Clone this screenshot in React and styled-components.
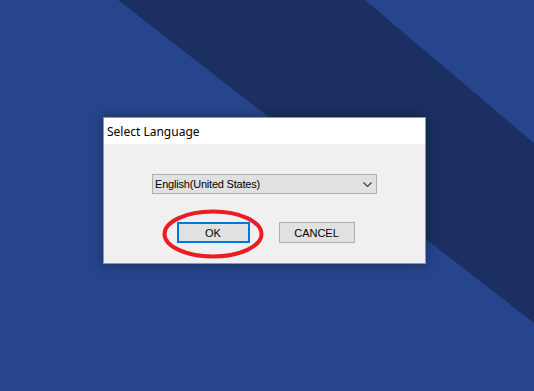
import React from "react";
import styled, { createGlobalStyle } from "styled-components";

const GlobalStyle = createGlobalStyle`
  html, body {
    margin: 0;
    padding: 0;
    background: #26458c;
  }
`;

const Desktop = styled.div`
  position: relative;
  width: 534px;
  height: 391px;
  overflow: hidden;
  background: #26458c;
  box-sizing: border-box;
  padding: 117px 0 0 103px;

  &::before {
    content: "";
    position: absolute;
    inset: 0;
    background: #1c2f62;
    clip-path: polygon(118px 0, 365px 0, 534px 143px, 534px 323px);
  }
`;

const Window = styled.div`
  position: relative;
  width: 323px;
  height: 147px;
  box-sizing: border-box;
  border: 1px solid #6c9de4;
  background: #f0f0f0;
  box-shadow: 0 0 12px rgba(0, 0, 0, 0.35);
  display: flex;
  flex-direction: column;
`;

const TitleBar = styled.div`
  height: 26px;
  background: #ffffff;
  display: flex;
  align-items: center;
  padding: 0 0 0 3px;
  font-family: "Noto Sans", "Open Sans", sans-serif;
  font-size: 12px;
  color: #000;
`;

const Client = styled.div`
  flex: 1;
  display: flex;
  flex-direction: column;
  align-items: center;
  padding-top: 30px;
  font-family: "Liberation Sans", Arial, sans-serif;
  font-size: 11px;
  color: #000;
`;

const Combo = styled.div`
  width: 225px;
  height: 20px;
  box-sizing: border-box;
  border: 1px solid #adadad;
  background: #e1e1e1;
  display: flex;
  align-items: center;
  justify-content: space-between;
  padding: 0 4px 0 2px;
  letter-spacing: -0.2px;
`;

const ButtonRow = styled.div`
  display: flex;
  gap: 29px;
  margin-top: 28px;
  padding-left: 2px;
`;

const Button = styled.div`
  width: ${(p) => p.$w}px;
  height: 21px;
  box-sizing: border-box;
  border: ${(p) => (p.$focused ? "2px solid #0078d7" : "1px solid #adadad")};
  background: #e1e1e1;
  display: flex;
  align-items: center;
  justify-content: center;
`;

const Circle = styled.svg`
  position: absolute;
  left: 58px;
  top: 91px;
  overflow: visible;
`;

export default function App() {
  return (
    <>
      <GlobalStyle />
      <Desktop>
        <Window>
          <TitleBar>Select Language</TitleBar>
          <Client>
            <Combo>
              <span>English(United States)</span>
              <svg width="9" height="5" viewBox="0 0 9 5">
                <path d="M0.5 0.5 L4.5 4.5 L8.5 0.5" fill="none" stroke="#404040" strokeWidth="1.2" />
              </svg>
            </Combo>
            <ButtonRow>
              <Button $w={73} $focused>OK</Button>
              <Button $w={76}>CANCEL</Button>
            </ButtonRow>
          </Client>
          <Circle width="102" height="50" viewBox="0 0 102 50">
            <ellipse cx="51" cy="25" rx="48.5" ry="22.5" fill="none" stroke="#ec1c24" strokeWidth="4" />
          </Circle>
        </Window>
      </Desktop>
    </>
  );
}
